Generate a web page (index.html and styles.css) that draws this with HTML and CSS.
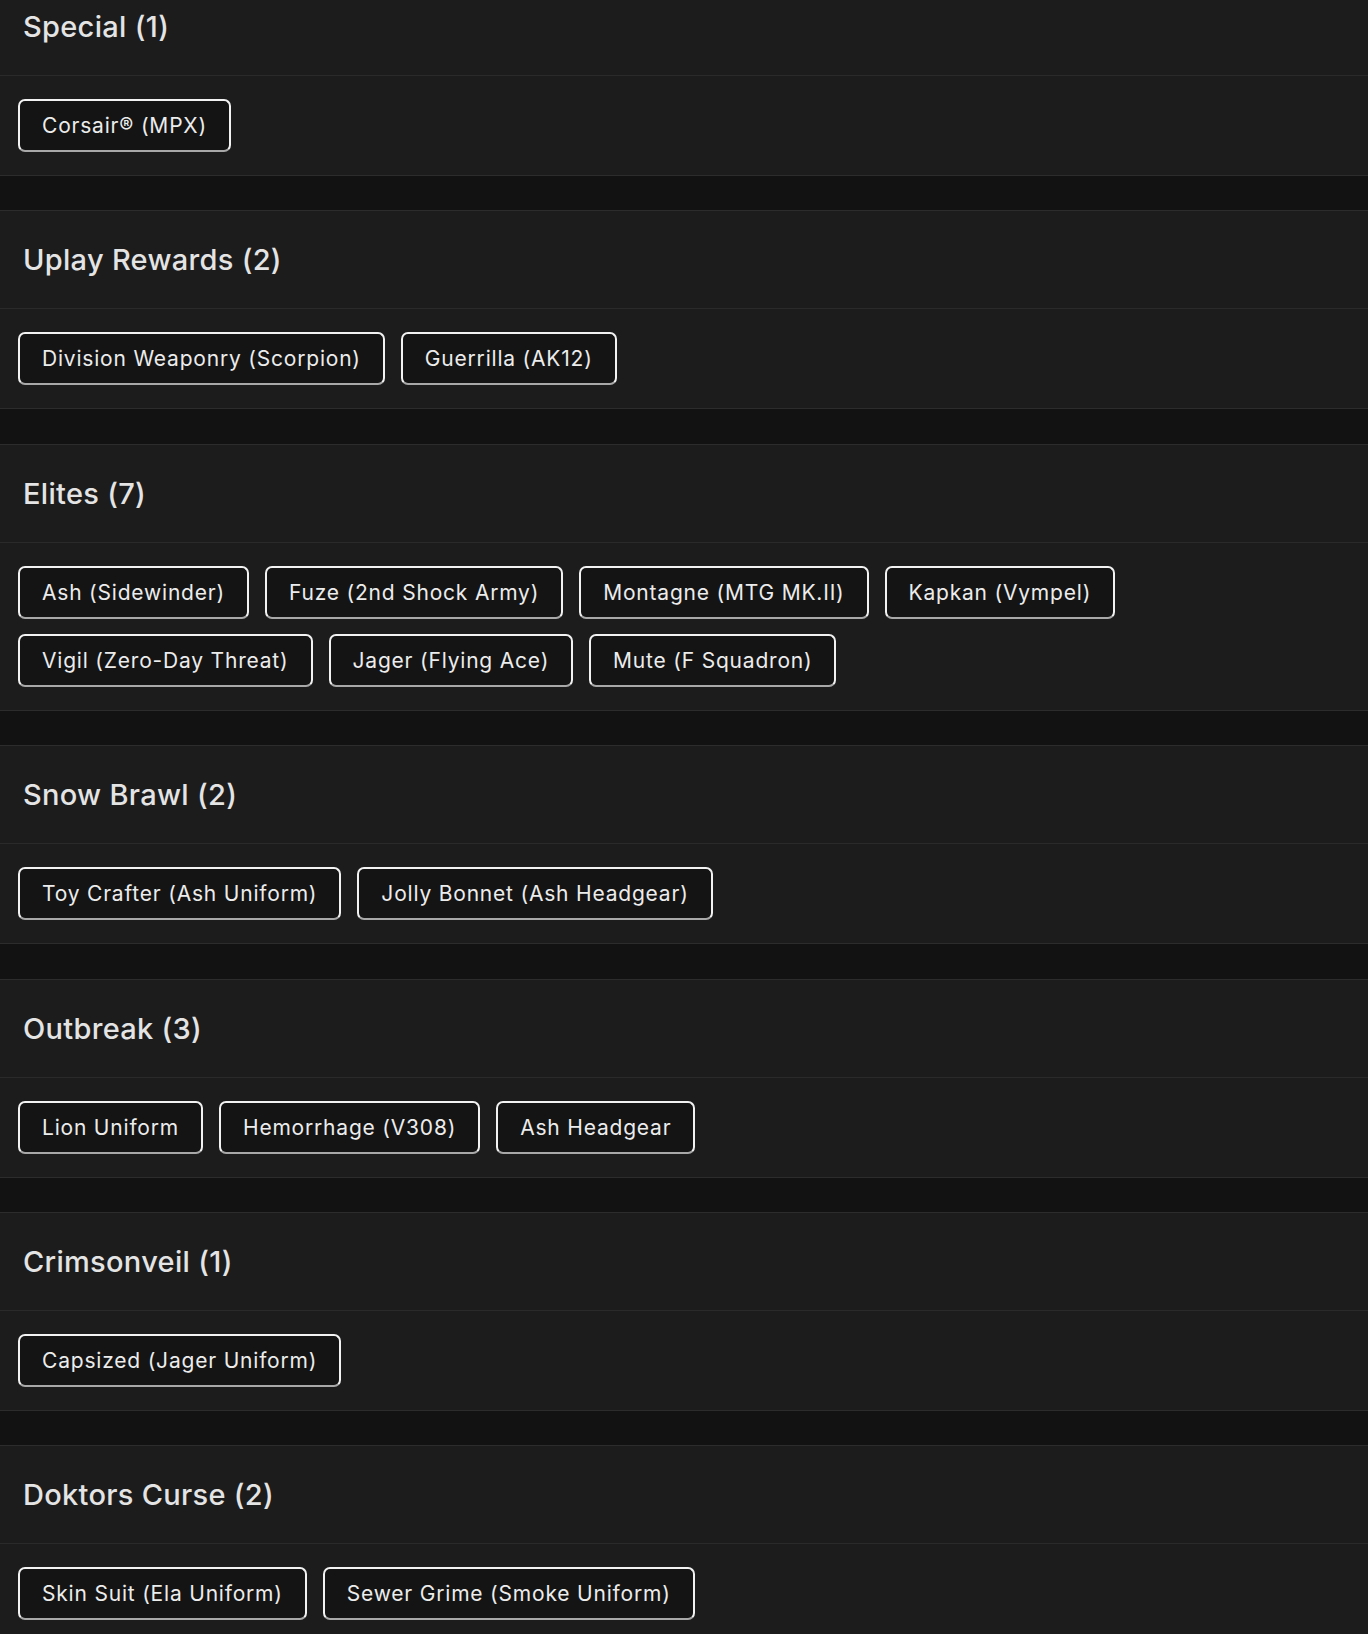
FILE: index.html
```html
<!DOCTYPE html>
<html lang="en">
<head>
<meta charset="utf-8">
<title>Bundles</title>
<link rel="stylesheet" href="styles.css">
</head>
<body>
<main class="list">
  <section class="group">
    <h2 class="group-title">Special (1)</h2>
    <div class="group-items">
      <span class="chip">Corsair® (MPX)</span>
    </div>
  </section>
  <section class="group">
    <h2 class="group-title">Uplay Rewards (2)</h2>
    <div class="group-items">
      <span class="chip">Division Weaponry (Scorpion)</span>
      <span class="chip">Guerrilla (AK12)</span>
    </div>
  </section>
  <section class="group">
    <h2 class="group-title">Elites (7)</h2>
    <div class="group-items">
      <span class="chip">Ash (Sidewinder)</span>
      <span class="chip">Fuze (2nd Shock Army)</span>
      <span class="chip">Montagne (MTG MK.II)</span>
      <span class="chip">Kapkan (Vympel)</span>
      <span class="chip">Vigil (Zero-Day Threat)</span>
      <span class="chip">Jager (Flying Ace)</span>
      <span class="chip">Mute (F Squadron)</span>
    </div>
  </section>
  <section class="group">
    <h2 class="group-title">Snow Brawl (2)</h2>
    <div class="group-items">
      <span class="chip">Toy Crafter (Ash Uniform)</span>
      <span class="chip">Jolly Bonnet (Ash Headgear)</span>
    </div>
  </section>
  <section class="group">
    <h2 class="group-title">Outbreak (3)</h2>
    <div class="group-items">
      <span class="chip">Lion Uniform</span>
      <span class="chip">Hemorrhage (V308)</span>
      <span class="chip">Ash Headgear</span>
    </div>
  </section>
  <section class="group">
    <h2 class="group-title">Crimsonveil (1)</h2>
    <div class="group-items">
      <span class="chip">Capsized (Jager Uniform)</span>
    </div>
  </section>
  <section class="group">
    <h2 class="group-title">Doktors Curse (2)</h2>
    <div class="group-items">
      <span class="chip">Skin Suit (Ela Uniform)</span>
      <span class="chip">Sewer Grime (Smoke Uniform)</span>
    </div>
  </section>
</main>
</body>
</html>
```

FILE: styles.css
```css
html, body {
  margin: 0;
  padding: 0;
  background: #121212;
}

body {
  font-family: Inter, "Noto Sans", "Liberation Sans", sans-serif;
  color: #e6e6e6;
  overflow: hidden;
}

.list {
  display: flex;
  flex-direction: column;
  gap: 34.4px;
  margin-top: -23px;
}

.group {
  background: #1c1c1c;
  border-top: 1px solid #2c2c2c;
  border-bottom: 1px solid #2c2c2c;
}

.group-title {
  margin: 0;
  height: 97px;
  display: flex;
  align-items: center;
  padding: 0 23px;
  font-size: 29px;
  font-weight: 500;
  letter-spacing: 0.3px;
  color: #e4e4e4;
  border-bottom: 1px solid #2a2a2a;
}

.group-items {
  display: flex;
  flex-wrap: wrap;
  gap: 15px 16px;
  padding: 23px 18px;
}

.chip {
  box-sizing: border-box;
  height: 53px;
  display: inline-flex;
  align-items: center;
  padding: 0 22px;
  border: 2px solid #f2f2f2;
  border-bottom-color: #a8a8a8;
  border-radius: 7px;
  background: #141414;
  font-size: 21px;
  letter-spacing: 0.8px;
  color: #ececec;
  white-space: nowrap;
}
```
